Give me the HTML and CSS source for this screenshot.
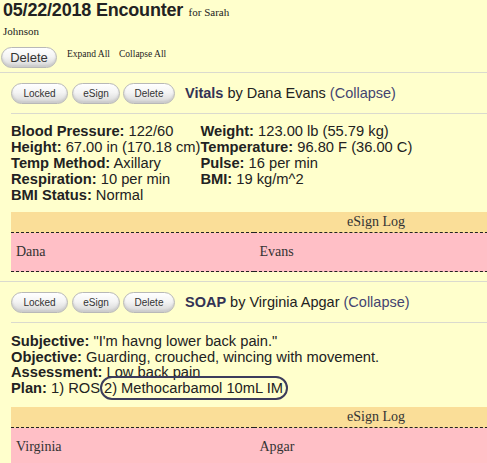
FILE: index.html
```html
<!DOCTYPE html>
<html>
<head>
<meta charset="utf-8">
<link rel="stylesheet" href="styles.css">
</head>
<body>
<div class="page">
  <div class="title"><span class="title-main">05/22/2018 Encounter</span> <span class="title-for">for Sarah</span></div>
  <div class="title-for name">Johnson</div>
  <div class="topbar">
    <button class="btn btn-big">Delete</button>
    <a class="toplink">Expand All</a>
    <a class="toplink">Collapse All</a>
  </div>
  <div class="rule"></div>

  <div class="form">
    <div class="form-head">
      <button class="btn btn-locked">Locked</button>
      <button class="btn btn-esign">eSign</button>
      <button class="btn btn-delete">Delete</button>
      <span class="form-title"><b>Vitals</b> by Dana Evans <span class="collapse">(Collapse)</span></span>
    </div>
    <div class="rule"></div>
    <table class="vitals">
      <tr><td><b>Blood Pressure:</b> 122/60</td><td><b>Weight:</b> 123.00 lb (55.79 kg)</td></tr>
      <tr><td><b>Height:</b> 67.00 in (170.18 cm)</td><td><b>Temperature:</b> 96.80 F (36.00 C)</td></tr>
      <tr><td><b>Temp Method:</b> Axillary</td><td><b>Pulse:</b> 16 per min</td></tr>
      <tr><td><b>Respiration:</b> 10 per min</td><td><b>BMI:</b> 19 kg/m^2</td></tr>
      <tr><td><b>BMI Status:</b> Normal</td><td></td></tr>
    </table>
    <div class="log-wrap">
      <table class="log">
        <tr class="log-head"><th colspan="3">eSign Log</th></tr>
        <tr class="log-row"><td>Dana</td><td>Evans</td><td></td></tr>
      </table>
    </div>
  </div>
  <div class="rule full"></div>

  <div class="form">
    <div class="form-head">
      <button class="btn btn-locked">Locked</button>
      <button class="btn btn-esign">eSign</button>
      <button class="btn btn-delete">Delete</button>
      <span class="form-title"><b>SOAP</b> by Virginia Apgar <span class="collapse">(Collapse)</span></span>
    </div>
    <div class="rule"></div>
    <div class="soap">
      <div><b>Subjective:</b> "I'm havng lower back pain."</div>
      <div><b>Objective:</b> Guarding, crouched, wincing with movement.</div>
      <div><b>Assessment:</b> Low back pain</div>
      <div><b>Plan:</b> 1) ROS<span class="circled">2) Methocarbamol 10mL IM</span></div>
    </div>
    <div class="log-wrap soap-log">
      <table class="log">
        <tr class="log-head"><th colspan="3">eSign Log</th></tr>
        <tr class="log-row"><td>Virginia</td><td>Apgar</td><td></td></tr>
      </table>
    </div>
  </div>
</div>
</body>
</html>
```

FILE: styles.css
```css
html, body {
  margin: 0;
  padding: 0;
  background: #ffffcc;
  overflow: hidden;
}
.page {
  padding: 0 0 0 3px;
  font-family: "Liberation Sans", Arial, sans-serif;
  color: #222;
}
.title {
  height: 20px;
  line-height: 20px;
  white-space: nowrap;
  overflow: visible;
}
.title-main {
  font-size: 18px;
  font-weight: bold;
  letter-spacing: -0.2px;
}
.title-for {
  font-family: "Liberation Serif", "Times New Roman", serif;
  font-size: 11px;
  margin-left: 1px;
}
.name {
  height: 14px;
  line-height: 14px;
  margin-top: 4px;
  margin-left: 0;
}
.topbar {
  display: flex;
  align-items: flex-start;
  margin-top: 9px;
  margin-bottom: 4px;
  height: 21px;
}
.toplink {
  font-family: "Liberation Serif", "Times New Roman", serif;
  font-size: 9.5px;
  line-height: 12px;
  color: #222;
  margin-left: 10px;
  margin-top: 1px;
}
.toplink + .toplink {
  margin-left: 9px;
}
.btn {
  font-family: "Liberation Sans", Arial, sans-serif;
  font-size: 10px;
  color: #333;
  height: 21px;
  padding: 0;
  border-radius: 11px;
  border: 1px solid #b8b8b8;
  background: linear-gradient(#ffffff, #f4f4f4 45%, #d6d6d6);
  box-shadow: inset 0 -2px 2px #cccccc;
  margin: 0;
}
.btn-big {
  font-size: 13px;
  width: 56px;
  margin-left: -2px;
}
.btn-locked { width: 57px; }
.btn-esign { width: 48px; margin-left: 4px; }
.btn-delete { width: 52px; margin-left: 3px; }
.rule {
  height: 1px;
  background: #dadace;
  margin: 0 0 0 -3px;
}
.rule.full {
  margin: 9px 0 0 -3px;
}
.form {
  padding-left: 8px;
}
.form > .rule {
  margin-left: 0;
}
.form-head {
  display: flex;
  align-items: center;
  height: 40px;
}
.form-title {
  font-size: 14.5px;
  margin-left: 10px;
  color: #222;
  white-space: nowrap;
}
.form-title b {
  color: #333355;
}
.collapse {
  color: #444470;
}
.vitals {
  border-collapse: collapse;
  margin-top: 9px;
  font-size: 14.7px;
}
.vitals td {
  padding: 0;
  height: 16px;
  line-height: 16px;
  vertical-align: top;
  white-space: nowrap;
}
.log-wrap {
  margin-top: 9px;
  width: 730px;
}
.soap-log {
  margin-top: 11px;
}
.log {
  width: 100%;
  border-collapse: collapse;
  font-family: "Liberation Serif", "Times New Roman", serif;
  font-size: 14px;
  color: #333;
}
.log-head th {
  background: #fade98;
  font-weight: normal;
  height: 20px;
  line-height: 20px;
  padding: 0;
  border-bottom: 1px dashed #222;
}
.log-row td {
  background: #ffbfc6;
  height: 38px;
  padding: 0 0 0 5px;
  width: 240px;
  border-bottom: 1px dashed #222;
}
.soap {
  margin-top: 11px;
  font-size: 14.7px;
  line-height: 15.5px;
  white-space: nowrap;
}
.soap > div {
  height: 15.5px;
}
.circled {
  position: relative;
  padding-left: 4px;
}
.circled::after {
  content: "";
  position: absolute;
  left: 0;
  right: -5px;
  top: -4px;
  bottom: -4px;
  border: 2px solid #3c3c5c;
  border-radius: 12px;
}
```
